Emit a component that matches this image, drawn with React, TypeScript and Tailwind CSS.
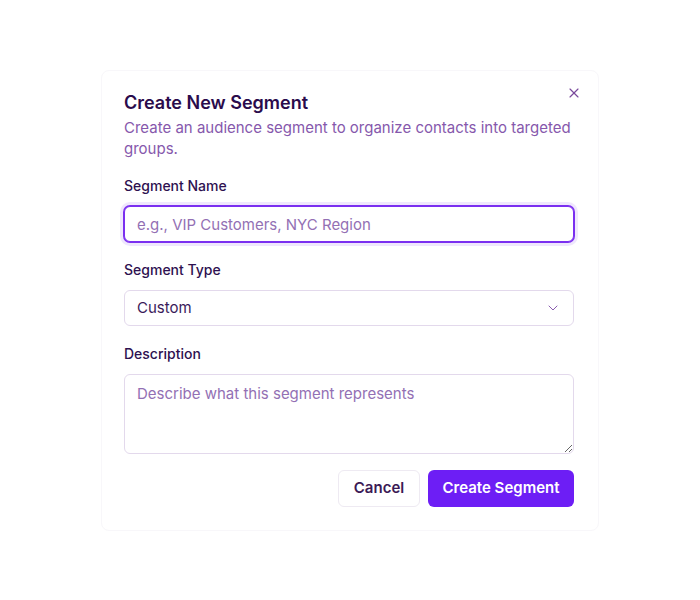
import { ChevronDown, X } from 'lucide-react';

export default function App() {
  return (
    <div className="flex min-h-screen justify-center bg-white pt-[70px] font-['Inter',sans-serif]">
      <div className="relative h-fit w-[498px] rounded-lg border border-[#f8f7fa] bg-white pb-[23px] pl-[22px] pr-6 pt-[18px]">
        <button className="absolute right-4 top-[14px] text-[#7a4a9c]">
          <X className="h-4 w-4" strokeWidth={1.75} />
        </button>

        <div className="flex flex-col">
          <h2 className="text-lg font-semibold leading-7 text-[#2a0b4c]">Create New Segment</h2>
          <p className="text-[15px] leading-[21px] text-[#8658ac]">
            Create an audience segment to organize contacts into targeted groups.
          </p>
        </div>

        <div className="mt-[17px] flex flex-col gap-[18px]">
          <div className="flex flex-col gap-2.5">
            <label className="text-sm font-medium leading-5 text-[#2e1150]">Segment Name</label>
            <input
              autoFocus
              placeholder="e.g., VIP Customers, NYC Region"
              className="h-9 w-full rounded-md border border-[#7b2ff0] bg-white px-3 text-[15px] text-[#2e1150] shadow-[0_0_0_1px_#7b2ff0,0_0_0_4px_rgba(124,58,237,0.12)] outline-none placeholder:text-[#9370b4]"
            />
          </div>

          <div className="flex flex-col gap-2.5">
            <label className="text-sm font-medium leading-5 text-[#2e1150]">Segment Type</label>
            <button className="flex h-9 w-full items-center justify-between rounded-md border border-[#e3d9ec] bg-white px-3 text-[15px] text-[#3a1a5a]">
              <span>Custom</span>
              <ChevronDown className="h-4 w-4 text-[#8a5cb0]" strokeWidth={1.5} />
            </button>
          </div>

          <div className="flex flex-col gap-2.5">
            <label className="text-sm font-medium leading-5 text-[#2e1150]">Description</label>
            <textarea
              placeholder="Describe what this segment represents"
              className="h-20 w-full rounded-md border border-[#e3d9ec] bg-white px-3 py-2 text-[15px] text-[#2e1150] outline-none placeholder:text-[#9370b4]"
            />
          </div>
        </div>

        <div className="mt-4 flex justify-end gap-2">
          <button className="h-[37px] w-[82px] rounded-md border border-[#eeeaf2] bg-white text-[15px] font-semibold text-[#3b1a55]">
            Cancel
          </button>
          <button className="h-[37px] w-[146px] rounded-md bg-[#6d1ef5] text-[15px] font-semibold text-white">
            Create Segment
          </button>
        </div>
      </div>
    </div>
  );
}
